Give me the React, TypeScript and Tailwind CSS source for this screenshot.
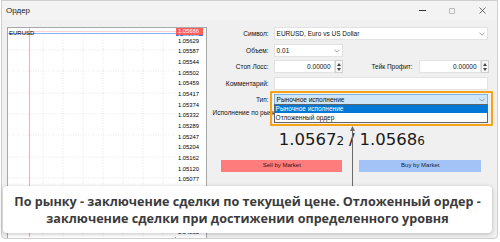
import React from 'react';

const prices = [
  '1.05629', '1.05587', '1.05544', '1.05502', '1.05459', '1.05417', '1.05374',
  '1.05332', '1.05289', '1.05247', '1.05204', '1.05162', '1.05120', '1.05077',
  '1.05035', '1.04992', '1.04950', '1.04907', '1.04865',
];

const Chevron = () => (
  <svg width="6" height="4" viewBox="0 0 6 4" className="shrink-0">
    <path d="M0.5 0.8 L3 3.2 L5.5 0.8" fill="none" stroke="#8a8a8a" strokeWidth="0.8" />
  </svg>
);

const Spinner = () => (
  <div className="w-[8px] h-[13px] flex flex-col items-center justify-center gap-[2px] border border-[#d0d0d0] bg-[#f7f7f7]">
    <svg width="4" height="3" viewBox="0 0 4 3"><path d="M0 3 L2 0 L4 3 Z" fill="#444" /></svg>
    <svg width="4" height="3" viewBox="0 0 4 3"><path d="M0 0 L2 3 L4 0 Z" fill="#444" /></svg>
  </div>
);

const ChartGrid = () => {
  const vx = [35, 55, 75, 95, 115, 135, 155];
  const hy = [22, 43, 65, 86, 107, 129, 150, 171, 193];
  return (
    <svg width="168" height="209" viewBox="0 0 168 209" className="block">
      <rect width="168" height="209" fill="#fff" />
      {vx.map((x) => (
        <line key={x} x1={x} y1="0" x2={x} y2="209" stroke="#d6d6d6" strokeWidth="0.6" strokeDasharray="1 1.5" />
      ))}
      {hy.map((y) => (
        <line key={y} x1="0" y1={y} x2="168" y2={y} stroke="#d6d6d6" strokeWidth="0.6" strokeDasharray="1 1.5" />
      ))}
      <line x1="21.5" y1="0" x2="21.5" y2="209" stroke="#ffb4b4" strokeWidth="1.2" />
      <line x1="21" y1="3.5" x2="168" y2="3.5" stroke="#ffc8c8" strokeWidth="0.8" />
      <line x1="0" y1="5.5" x2="168" y2="5.5" stroke="#8fb1f2" strokeWidth="1" />
    </svg>
  );
};

export default function App() {
  const ui = { fontFamily: '"Liberation Sans", Arial, sans-serif' };
  return (
    <div className="relative w-[500px] h-[242px] bg-white overflow-hidden" style={ui}>
      <div className="absolute left-[1px] top-0 w-[497px] h-[239px] bg-[#f0f0f0] border border-[#cfcfcf] rounded-b-[4px] overflow-hidden">
        {/* title bar */}
        <div className="h-[19px] flex items-center justify-between bg-[#f3f3f3]">
          <span className="pl-[4px] text-[8px] text-[#222]">Ордер</span>
          <div className="flex items-center h-full text-[#333]">
            <div className="w-[30px] flex justify-center">
              <div className="w-[7px] h-[1px] bg-[#333]" />
            </div>
            <div className="w-[30px] flex justify-center">
              <div className="w-[6px] h-[6px] border border-[#b8b8b8] rounded-[1px]" />
            </div>
            <div className="w-[30px] flex justify-center">
              <svg width="7" height="7" viewBox="0 0 7 7"><path d="M0.5 0.5 L6.5 6.5 M6.5 0.5 L0.5 6.5" stroke="#444" strokeWidth="0.8" /></svg>
            </div>
          </div>
        </div>

        {/* body */}
        <div className="flex pl-[5px] pt-[7px]">
          {/* chart */}
          <div className="relative flex w-[200px] h-[212px] border border-[#a8a8a8] bg-white overflow-hidden">
            <div className="w-[168px] border-r border-[#9a9a9a]">
              <ChartGrid />
            </div>
            <span className="absolute left-[1px] top-[2px] text-[6px] leading-none text-black">EURUSD</span>
            <div className="flex-1 flex flex-col text-[5.8px] text-black pl-[2px]">
              <div className="h-[7px] w-[27px] -ml-[2px] pl-[2px] bg-[#ff5c5c] text-white leading-[7px]">1.05686</div>
              <div className="h-[4px] w-[27px] -ml-[2px] pl-[2px] bg-[#2f6fe0] text-white leading-[4px] overflow-hidden">1.05672</div>
              <div className="h-[1px]" />
              {prices.map((p) => (
                <div key={p} className="h-[10.65px] leading-[10.65px] shrink-0">{p}</div>
              ))}
            </div>
          </div>

          {/* form */}
          <div className="relative w-[291px] text-[6.5px] text-[#111]">
            <div className="flex items-center h-[13px]">
              <span className="w-[62px] text-right">Символ:</span>
              <div className="ml-[5px] w-[214px] h-[13px] bg-white border border-[#e2e2e2] flex items-center justify-between px-[2px]">
                <span>EURUSD, Euro vs US Dollar</span>
                <Chevron />
              </div>
            </div>
            <div className="flex items-center h-[13px] mt-[4px]">
              <span className="w-[62px] text-right">Объем:</span>
              <div className="ml-[5px] w-[69px] h-[13px] bg-white border border-[#e2e2e2] flex items-center justify-between px-[2px]">
                <span>0.01</span>
                <Chevron />
              </div>
            </div>
            <div className="flex items-center h-[13px] mt-[3px]">
              <span className="w-[62px] text-right">Стоп Лосс:</span>
              <div className="ml-[5px] w-[61px] h-[13px] bg-white border border-[#e2e2e2] flex items-center justify-end pr-[3px]">
                0.00000
              </div>
              <Spinner />
              <span className="w-[70px] text-right">Тейк Профит:</span>
              <div className="ml-[6px] w-[62px] h-[13px] bg-white border border-[#e2e2e2] flex items-center justify-end pr-[3px]">
                0.00000
              </div>
              <Spinner />
            </div>
            <div className="flex items-center h-[13px] mt-[4px]">
              <span className="w-[62px] text-right">Комментарий:</span>
              <div className="ml-[5px] w-[214px] h-[13px] bg-white border border-[#e2e2e2]" />
            </div>
            <div className="relative flex items-center h-[11px] mt-[4px]">
              <span className="w-[62px] text-right">Тип:</span>
              <div className="ml-[5px] w-[214px] h-[11px] bg-[#cfe5f8] border border-[#7fb3e0] flex items-center justify-between px-[2px]">
                <span>Рыночное исполнение</span>
                <Chevron />
              </div>
            </div>
            <div className="flex items-center h-[11px] mt-[2px] -ml-[1px]">
              <span className="pl-[7px] whitespace-nowrap">Исполнение по рынку:</span>
            </div>

            {/* dropdown list */}
            <div className="absolute left-[67px] top-[77px] w-[214px] h-[19px] bg-white border border-[#646464] flex flex-col">
              <div className="h-[8px] bg-[#0078d7] text-white leading-[8px] pl-[1px]">Рыночное исполнение</div>
              <div className="h-[9px] leading-[9px] pl-[1px]">Отложенный ордер</div>
            </div>
            {/* highlight frame */}
            <div className="absolute left-[63px] top-[64px] w-[223px] h-[35px] border-2 border-[#f7a21b] rounded-[1px]" />

            {/* price */}
            <div className="relative mt-[8px] h-[56px]">
              <div className="absolute left-[145px] top-[2px] w-[1px] h-[60px] bg-[#6a6a6a]" />
              <svg className="absolute left-[143px] top-0" width="5" height="5" viewBox="0 0 5 5"><path d="M2.5 0 L5 5 L0 5 Z" fill="#6a6a6a" /></svg>
              <div className="flex justify-center items-baseline pt-[6px] text-[#1a1a1a]" style={{ fontFamily: '"DejaVu Sans", "Liberation Sans", sans-serif' }}>
                <span className="text-[16.5px] leading-none">1.0567</span>
                <span className="text-[12px] leading-none">2</span>
                <span className="text-[16.5px] leading-none mx-[5px]">/</span>
                <span className="text-[16.5px] leading-none">1.0568</span>
                <span className="text-[12px] leading-none">6</span>
              </div>
              <div className="flex justify-center gap-[17px] mt-[11px] -ml-[1px]">
                <div className="w-[121px] h-[12px] bg-[#ff7c7c] flex items-center justify-center text-[6px] text-[#3a1010]">Sell by Market</div>
                <div className="w-[122px] h-[12px] bg-[#a3c3f7] flex items-center justify-center text-[6px] text-[#10203a]">Buy by Market</div>
              </div>
            </div>
          </div>
        </div>
      </div>

      {/* caption overlay */}
      <div className="absolute left-[3px] top-[186px] w-[489px] h-[47px] bg-white rounded-[4px] shadow-[0_1px_4px_rgba(0,0,0,0.25)] flex flex-col items-center justify-center text-[#3b3b3b] font-bold text-[12.6px] leading-[17px]" style={{ fontFamily: '"Open Sans", "Noto Sans", sans-serif' }}>
        <span className="whitespace-nowrap">По рынку - заключение сделки по текущей цене. Отложенный ордер -</span>
        <span className="whitespace-nowrap">заключение сделки при достижении определенного уровня</span>
      </div>
    </div>
  );
}
